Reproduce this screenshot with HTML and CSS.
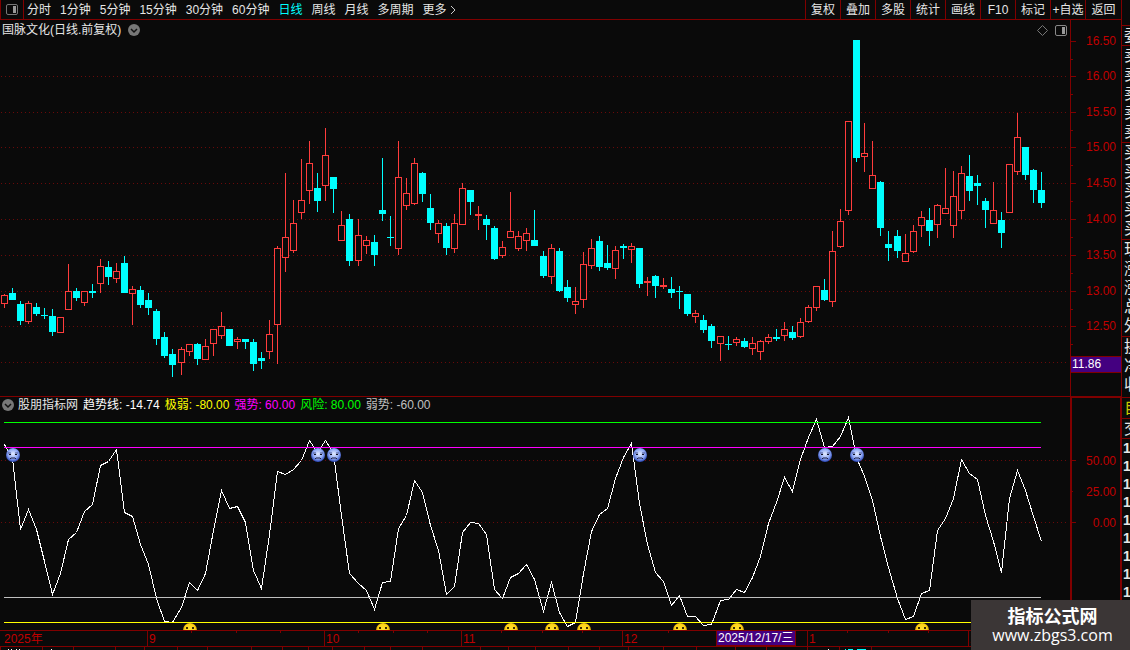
FILE: index.html
```html
<!DOCTYPE html>
<html lang="zh-CN">
<head>
    <meta charset="UTF-8">
    <meta name="viewport" content="width=device-width, initial-scale=1.0">
    <title>国脉文化 日线</title>
    <link rel="stylesheet" href="styles.css">
</head>
<body>
    <main class="terminal">
        <header class="toolbar">
            <button class="layout-button" aria-label="布局">
                <svg width="12" height="11" viewBox="0 0 12 11">
                    <rect x="0.5" y="0.5" width="11" height="10" rx="1.5" fill="none" stroke="#777"/>
                    <rect x="7" y="2" width="3" height="7" fill="#999"/>
                </svg>
            </button>
            <nav class="periods">
                <button>分时</button>
                <button>1分钟</button>
                <button>5分钟</button>
                <button>15分钟</button>
                <button>30分钟</button>
                <button>60分钟</button>
                <button class="active">日线</button>
                <button>周线</button>
                <button>月线</button>
                <button>多周期</button>
                <button class="more">更多
                    <svg width="6" height="10" viewBox="0 0 6 10"><path d="M1 1l4 4-4 4" fill="none" stroke="#ccc"/></svg>
                </button>
            </nav>
            <div class="tools">
                <button>复权</button>
                <button>叠加</button>
                <button>多股</button>
                <button>统计</button>
                <button>画线</button>
                <button>F10</button>
                <button>标记</button>
                <button>+自选</button>
                <button>返回</button>
            </div>
        </header>

        <section class="panel">
            <svg class="plot" id="pricePlot"></svg>
            <div class="panel-title">
                <span>国脉文化(日线.前复权)</span>
                <button class="round" aria-label="展开">
                    <svg width="12" height="12" viewBox="0 0 12 12"><circle cx="6" cy="6" r="6" fill="#777"/><path d="M3 5l3 3 3-3" fill="none" stroke="#111" stroke-width="1.5"/></svg>
                </button>
                <div class="panel-icons">
                    <svg width="11" height="11" viewBox="0 0 11 11"><path d="M5.5 0.5l5 5-5 5-5-5z" fill="none" stroke="#777"/></svg>
                    <svg width="12" height="11" viewBox="0 0 12 11">
                        <rect x="0.5" y="0.5" width="11" height="10" rx="1.5" fill="none" stroke="#888"/>
                        <rect x="7" y="2" width="3" height="7" fill="#999"/>
                    </svg>
                </div>
            </div>
        </section>

        <section class="panel">
            <svg class="plot" id="trendPlot"></svg>
            <div class="legend">
                <button class="round" aria-label="指标">
                    <svg width="12" height="12" viewBox="0 0 12 12"><circle cx="6" cy="6" r="6" fill="#777"/><path d="M3 5l3 3 3-3" fill="none" stroke="#111" stroke-width="1.5"/></svg>
                </button>
                <span>股朋指标网</span>
                <span class="trend">趋势线: -14.74</span>
                <span class="very-weak">极弱: -80.00</span>
                <span class="strong">强势: 60.00</span>
                <span class="risk">风险: 80.00</span>
                <span class="weak">弱势: -60.00</span>
            </div>
        </section>

        <svg class="plot" id="timeAxis"></svg>
        <svg class="plot" id="tabStrip"></svg>
    </main>

    <aside class="quote">
        <div class="cells"><span>委</span></div>
        <div class="cells"><span>卖</span><span>卖</span><span>卖</span><span>卖</span><span>卖</span></div>
        <div class="cells"><span>买</span><span>买</span><span>买</span><span>买</span><span>买</span></div>
        <div class="cells"><span>现</span><span>涨</span><span>涨</span><span>总</span><span>外</span></div>
        <div class="cells short"><span>换</span><span>净</span><span>收</span></div>
        <div class="cells own"><span>自</span></div>
        <div class="cells deal"><span>交</span></div>
        <div class="cells ticks"><span>1</span><span>1</span><span>1</span><span>1</span><span>1</span><span>1</span><span>1</span><span>1</span><span>1</span></div>
    </aside>

    <div class="watermark">
        <strong>指标公式网</strong>
        <span>www.zbgs3.com</span>
    </div>

    <script src="script.js"></script>
</body>
</html>
```

FILE: styles.css
```css
:root {
    --background: #0a0a0a;
    --line: #800000;
    --scale-text: #c00000;
    --text: #e6e6e6;
}

* {
    box-sizing: border-box;
}

body {
    margin: 0;
    height: 100vh;
    display: flex;
    overflow: hidden;
    background: var(--background);
    color: var(--text);
    font-family: "Liberation Sans", "Noto Sans CJK SC", sans-serif;
    font-size: 12px;
    line-height: 18px;
}

button {
    margin: 0;
    padding: 0;
    border: 0;
    background: none;
    color: inherit;
    font: inherit;
    white-space: nowrap;
    cursor: pointer;
}

svg {
    display: block;
}

.terminal {
    flex: 1;
    min-width: 0;
    display: grid;
    grid-template-rows: 20px 376fr 234fr 17px 3px;
    grid-template-columns: minmax(0, 1fr);
}

/* toolbar */
.toolbar {
    display: flex;
    border-bottom: 1px solid var(--line);
}

.layout-button {
    width: 24px;
    display: flex;
    align-items: center;
    justify-content: center;
    border-left: 1px solid var(--line);
    border-right: 1px solid var(--line);
}

.periods {
    display: flex;
    gap: 9px;
    padding-left: 3px;
}

.periods .active {
    color: #00ffff;
}

.more {
    display: flex;
    align-items: center;
    gap: 3px;
}

.tools {
    display: flex;
    margin-left: auto;
}

.tools button {
    width: 35px;
    border-left: 1px solid var(--line);
}

.tools button:last-child {
    width: 36px;
}

/* chart panels */
.panel {
    display: grid;
    grid-template-columns: minmax(0, 1fr);
    grid-template-rows: minmax(0, 1fr);
    min-height: 0;
}

.panel > * {
    grid-area: 1 / 1;
}

.plot {
    width: 100%;
    height: 100%;
    min-height: 0;
    overflow: hidden;
}

.panel-title,
.legend {
    align-self: start;
    display: flex;
    align-items: center;
}

.panel-title {
    gap: 7px;
    padding: 0 54px 0 2px;
    line-height: 20px;
}

.panel-icons {
    display: flex;
    gap: 7px;
    margin-left: auto;
}

.legend {
    gap: 5px;
    padding-left: 2px;
}

.legend .round {
    margin-right: -1px;
}

.trend { color: #ffffff; }
.very-weak { color: #ffff00; }
.strong { color: #ff00ff; }
.risk { color: #00ff00; }
.weak { color: #c0c0c0; }

/* drawn shapes */
.crisp {
    shape-rendering: crispEdges;
}

.scale-text {
    fill: var(--scale-text);
}

.tag-text {
    fill: #ffffff;
}

/* quote column, cut off by the window edge */
.quote {
    flex: 0 0 9px;
    overflow: hidden;
    padding-top: 25px;
    border-left: 1px solid var(--line);
    font-size: 16px;
    line-height: 19px;
}

.cells {
    padding: 0 0 1px 2px;
    border-top: 1px solid var(--line);
}

.cells:first-child {
    padding-bottom: 0;
}

.cells span {
    display: block;
    width: 16px;
}

.short {
    padding-bottom: 3px;
}

.own {
    color: #cccc00;
}

.deal {
    padding-bottom: 0;
}

.ticks {
    padding-left: 1px;
    font-weight: bold;
    font-size: 14px;
    line-height: 18px;
}

.watermark {
    position: fixed;
    right: 0;
    bottom: 0;
    width: 159px;
    height: 50px;
    display: flex;
    flex-direction: column;
    align-items: center;
    justify-content: center;
    padding-left: 4px;
    background: #3b3636;
    color: #ffffff;
    font-family: "Open Sans", "Noto Sans CJK SC", sans-serif;
    font-size: 16px;
    line-height: 20px;
}

.watermark strong {
    font-family: "Noto Sans CJK SC", sans-serif;
    font-size: 18px;
}
```

FILE: script.js
```js
const NS = 'http://www.w3.org/2000/svg';

const BG = '#0a0a0a';
const LINE = '#800000';
const TAG = '#440080';
const UP = '#ff3c3c';
const DOWN = '#00ffff';

// design size of the drawing area, everything scales from it
const BASE_WIDTH = 1070;
const SCALE_WIDTH = 51;

// direction, high, body top, body bottom, low
const candles = [
    'r 294 295 304 308', 'c 288 293 300 300', 'c 301 304 321 325', 'r 301 303 322 324', 'c 303 307 314 316',
    'c 308 315 316 319', 'c 309 316 332 336', 'r 317 317 333 333', 'r 264 291 310 310', 'c 288 291 298 301',
    'r 291 291 303 306', 'c 284 291 293 298', 'r 259 266 284 293', 'c 261 267 277 285', 'r 263 271 279 283',
    'c 256 263 293 293', 'r 286 289 294 325', 'c 286 290 305 308', 'c 293 300 308 315', 'c 309 311 339 345',
    'c 332 337 356 358', 'c 349 354 365 377', 'r 347 349 363 375', 'r 344 344 352 356', 'c 343 344 359 365',
    'r 339 346 360 360', 'r 329 329 344 356', 'r 312 326 336 339', 'c 329 329 346 346', 'r 337 339 342 349',
    'c 339 339 342 349', 'c 339 342 364 371', 'c 352 358 361 369', 'r 320 334 352 359', 'r 246 248 325 364',
    'r 173 237 258 272', 'r 200 223 251 253', 'r 159 200 213 219', 'r 141 163 191 204', 'c 173 188 201 212',
    'r 128 155 186 201', 'c 177 177 189 213', 'r 211 225 241 241', 'c 214 219 261 266', 'r 219 235 261 266',
    'r 236 240 246 254', 'c 235 242 255 266', 'c 158 210 214 221', 'c 216 237 238 246', 'r 141 177 249 255',
    'r 178 193 206 210', 'r 158 163 204 205', 'c 172 173 194 202', 'c 194 208 223 230', 'r 220 223 234 243',
    'c 223 226 248 255', 'r 214 223 249 253', 'r 183 188 225 225', 'c 190 190 202 215', 'r 206 214 216 230',
    'c 215 219 225 240', 'c 226 228 259 260', 'r 241 247 256 258', 'r 192 231 238 238', 'r 231 236 249 251',
    'r 228 233 241 251', 'c 210 240 246 246', 'c 251 256 276 278', 'r 244 248 277 284', 'c 248 251 291 292',
    'c 280 287 298 302', 'r 287 301 305 314', 'r 252 264 300 308', 'r 239 248 266 269', 'c 236 241 267 271',
    'c 245 263 268 270', 'r 246 250 269 279', 'c 244 246 248 259', 'r 243 246 250 263', 'c 248 248 284 288',
    'r 277 281 283 296', 'c 275 276 286 298', 'r 278 285 287 289', 'c 277 289 293 298', 'c 286 291 292 309',
    'c 294 294 314 316', 'r 310 313 317 323', 'c 315 320 330 333', 'c 324 326 341 348', 'r 336 336 344 361',
    'c 336 344 345 350', 'r 337 339 343 346', 'c 338 341 347 348', 'r 337 343 349 355', 'r 340 341 352 360',
    'r 334 337 342 344', 'c 329 337 339 341', 'r 322 329 336 341', 'c 326 332 338 340', 'r 318 322 337 338',
    'r 305 307 322 323', 'r 286 286 308 311', 'c 279 290 300 301', 'r 231 251 302 307', 'r 209 221 247 248',
    'r 121 121 211 215', 'c 40 40 158 162', 'r 123 153 157 172', 'r 141 175 189 189', 'c 181 182 228 236',
    'c 231 244 248 261', 'c 230 236 251 258', 'r 234 253 262 262', 'r 225 231 252 253', 'r 211 217 226 237',
    'c 208 220 231 246', 'r 204 205 225 238', 'r 168 208 214 214', 'r 171 196 226 238', 'r 166 173 211 219',
    'c 155 176 191 201', 'c 175 183 186 205', 'c 198 201 210 228', 'r 182 210 224 224', 'c 212 220 233 248',
    'r 164 164 213 213', 'r 113 137 172 175', 'c 147 147 175 180', 'c 169 170 190 203', 'c 172 190 203 208'
];

const trend = [
    444, 458, 529, 509, 529, 561, 594, 573, 539, 532, 511, 504, 465, 461, 449, 512, 516, 544, 564, 598,
    621, 622, 607, 582, 590, 573, 530, 490, 508, 506, 522, 570, 588, 534, 471, 474, 469, 460, 440, 452,
    440, 453, 515, 573, 583, 590, 609, 582, 581, 528, 515, 480, 492, 525, 550, 594, 586, 532, 522, 523,
    534, 589, 598, 577, 573, 564, 579, 611, 582, 612, 626, 622, 573, 531, 514, 508, 478, 457, 443, 503,
    544, 572, 581, 605, 595, 616, 616, 625, 624, 600, 599, 589, 592, 577, 556, 523, 502, 477, 491, 459,
    437, 419, 447, 446, 436, 417, 457, 476, 500, 536, 567, 598, 619, 616, 593, 590, 530, 518, 498, 459,
    473, 479, 515, 541, 572, 498, 470, 490, 516, 541
];

const prices = [[41, '16.50'], [76, '16.00'], [112, '15.50'], [147, '15.00'], [183, '14.50'],
    [219, '14.00'], [255, '13.50'], [291, '13.00'], [326, '12.50'], [362, '']];

const months = [[147, '9'], [324, '10'], [461, '11'], [622, '12'], [807, '1'], [968, '2']];

function add(parent, name, attrs, text) {
    const node = document.createElementNS(NS, name);
    for (const key in attrs) node.setAttribute(key, attrs[key]);
    if (text !== undefined) node.textContent = text;
    parent.appendChild(node);
    return node;
}

function box(parent, x, y, width, height, fill) {
    add(parent, 'rect', { x, y, width, height, fill, class: 'crisp' });
}

function candleX(i) {
    return Math.floor(4.045 + 8.0447 * i);
}

// clears the svg and returns helpers that map design units to its real size
function prepare(id, top, height) {
    const svg = document.getElementById(id);
    svg.replaceChildren();
    const size = svg.getBoundingClientRect();
    const plotWidth = size.width - SCALE_WIDTH;
    return {
        svg,
        w: plotWidth,
        h: size.height,
        x: v => Math.round(v * plotWidth / BASE_WIDTH),
        y: v => Math.round((v - top) * size.height / height)
    };
}

function gridLine(p, y) {
    add(p.svg, 'line', { x1: 1, x2: p.w - 3, y1: y + 0.5, y2: y + 0.5, stroke: '#6a0a0a', 'stroke-dasharray': '1 3', class: 'crisp' });
}

function drawPrices() {
    const p = prepare('pricePlot', 20, 376);

    box(p.svg, p.w, 0, 1, p.h, LINE);
    prices.forEach(([v, label], i) => {
        const y = p.y(v);
        if (i > 0) gridLine(p, y);
        if (!label) return;
        box(p.svg, p.w, y, 6, 1, LINE);
        box(p.svg, p.w, p.y(v + 18), 3, 1, LINE);
        add(p.svg, 'text', { x: p.w + 46, y: y + 4, 'text-anchor': 'end', class: 'scale-text' }, label);
    });

    candles.forEach((row, i) => {
        const [kind, ...levels] = row.split(' ');
        const [high, top, bottom, low] = levels.map(v => p.y(Number(v)));
        const x = p.x(candleX(i));
        const color = kind === 'r' ? UP : DOWN;
        box(p.svg, x, high, 1, low - high, color);
        box(p.svg, x - 3, top, 7, bottom - top, color);
        if (kind === 'r' && bottom - top > 2) {
            box(p.svg, x - 2, top + 1, 5, bottom - top - 2, BG);
        }
    });

    // cursor price
    const tag = p.y(356);
    box(p.svg, p.w, tag, SCALE_WIDTH, 17, LINE);
    box(p.svg, p.w + 1, tag + 1, SCALE_WIDTH - 1, 15, TAG);
    add(p.svg, 'text', { x: p.w + 2, y: tag + 12, class: 'tag-text' }, '11.86');
}

function face(svg, x, y, sad) {
    const g = add(svg, 'g', { transform: `translate(${x} ${y})` });
    add(g, 'circle', { r: 7, fill: sad ? 'url(#blue)' : 'url(#yellow)' });
    if (sad) {
        add(g, 'path', { d: 'M-5 -2h3M2 -2h3', fill: 'none', stroke: '#4a5590' });
        add(g, 'path', { d: 'M-4 -1h2v1h-2zM2 -1h2v1h-2z', fill: '#101020' });
        add(g, 'path', { d: 'M-3 4l1 -1h4l1 1', fill: 'none', stroke: '#202040' });
    } else {
        add(g, 'path', { d: 'M-4 -3h2v2h-2zM2 -3h2v2h-2z', fill: '#3a2a00' });
    }
}

function gradient(svg, id, inner, middle, outer) {
    const g = add(svg, 'radialGradient', { id, cx: '50%', cy: '42%', r: '58%' });
    add(g, 'stop', { offset: '0', 'stop-color': inner });
    add(g, 'stop', { offset: '0.6', 'stop-color': middle });
    add(g, 'stop', { offset: '1', 'stop-color': outer });
}

function drawTrend() {
    const p = prepare('trendPlot', 396, 234);
    gradient(p.svg, 'blue', '#e4ecff', '#8ea8f4', '#2440b0');
    gradient(p.svg, 'yellow', '#ffe030', '#fcd116', '#b88400');

    box(p.svg, 0, 0, p.w + SCALE_WIDTH, 1, LINE);
    box(p.svg, p.w, 0, 2, p.h, LINE);
    box(p.svg, p.w, 1, SCALE_WIDTH, 1, LINE);
    box(p.svg, p.w + SCALE_WIDTH - 1, 0, 1, p.h, LINE);

    [[460, '50.00', 6], [491, '25.00', 3], [522, '0.00', 6]].forEach(([v, label, tick]) => {
        const y = p.y(v);
        if (tick === 6) gridLine(p, y);
        box(p.svg, p.w, y, tick, 1, LINE);
        add(p.svg, 'text', { x: p.w + 46, y: y + 5, 'text-anchor': 'end', class: 'scale-text' }, label);
    });

    const end = p.x(1041) - p.x(4);
    const points = trend.map((v, i) => `${p.x(candleX(i)) + 0.5},${p.y(v) + 0.5}`).join(' ');
    add(p.svg, 'polyline', { points, fill: 'none', stroke: '#ffffff', class: 'crisp' });
    box(p.svg, p.x(4), p.y(422), end, 1, '#00ff00');
    box(p.svg, p.x(4), p.y(447), end, 1, '#ff00ff');
    box(p.svg, p.x(4), p.y(597), end, 1, '#c0c0c0');
    box(p.svg, p.x(4), p.y(622), end, 1, '#ffff00');

    [13, 318, 334, 640, 825, 857].forEach(x => face(p.svg, p.x(x), p.y(455), true));
    [190, 383, 511, 552, 584, 680, 737, 922].forEach(x => face(p.svg, p.x(x), p.y(630), false));
}

function drawAxis() {
    const p = prepare('timeAxis', 630, 17);
    box(p.svg, 0, 0, p.w + SCALE_WIDTH, 1, LINE);
    box(p.svg, 0, 16, p.w + SCALE_WIDTH, 1, LINE);
    [191, 236, 280, 358, 393, 427, 501, 542, 582, 668, 847, 888, 928].forEach(x => box(p.svg, p.x(x), 0, 1, 3, LINE));
    add(p.svg, 'text', { x: p.x(4), y: 13, class: 'scale-text' }, '2025年');
    months.forEach(([x, label]) => {
        box(p.svg, p.x(x), 0, 1, 16, LINE);
        add(p.svg, 'text', { x: p.x(x) + 2, y: 13, class: 'scale-text' }, label);
    });
    const x = p.x(716);
    box(p.svg, x, 0, 80, 16, LINE);
    box(p.svg, x + 1, 1, 78, 14, TAG);
    add(p.svg, 'text', { x: x + 2, y: 12, class: 'tag-text' }, '2025/12/17/三');
}

// upper edge of the tab row that runs below the window
function drawTabs() {
    const p = prepare('tabStrip', 647, 3);
    [0, 42, 73, 115, 144, 177, 207, 251, 282, 308, 332, 364, 390, 422, 480, 508, 535, 568, 599, 628, 663, 696, 735, 766, 807, 839, 871]
        .forEach(x => box(p.svg, p.x(x), 0, 1, 3, LINE));
    [8, 11, 16, 19, 51, 828].forEach(x => box(p.svg, p.x(x), 2, 1, 1, '#ffffff'));
    [[845, 1], [848, 5], [857, 9]].forEach(([x, width]) => box(p.svg, p.x(x), 2, width, 1, DOWN));
}

function draw() {
    drawPrices();
    drawTrend();
    drawAxis();
    drawTabs();
}

window.addEventListener('resize', draw);
draw();
```
